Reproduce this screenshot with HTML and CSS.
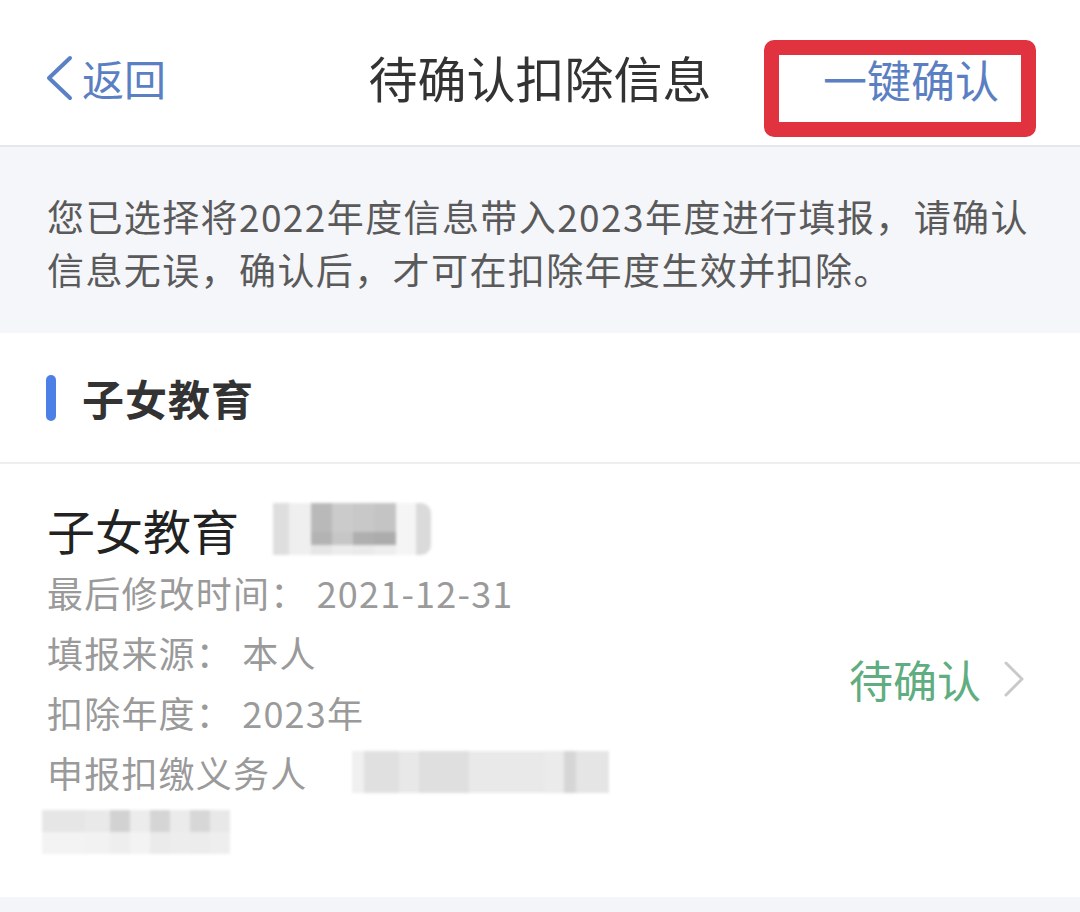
FILE: index.html
```html
<!DOCTYPE html>
<html lang="zh-CN">
<head>
<meta charset="utf-8">
<title>待确认扣除信息</title>
<link rel="stylesheet" href="styles.css">
</head>
<body>
<div class="page">
  <header class="nav">
    <div class="nav-left">
      <svg class="back-icon" width="30" height="46" viewBox="0 0 30 46"><polyline points="26,3 5,23 26,43" fill="none" stroke="#5a80c6" stroke-width="4" stroke-linecap="round" stroke-linejoin="round"/></svg>
      <span class="back-text">返回</span>
    </div>
    <div class="nav-title">待确认扣除信息</div>
    <div class="nav-right">
      <div class="confirm-box"><span class="confirm-text">一键确认</span></div>
    </div>
  </header>

  <section class="notice">
    <p class="notice-text">您已选择将2022年度信息带入2023年度进行填报，请确认信息无误，确认后，才可在扣除年度生效并扣除。</p>
  </section>

  <section class="section-head">
    <span class="bar"></span>
    <h2 class="section-title">子女教育</h2>
  </section>

  <section class="item">
    <div class="item-main">
      <div class="item-title">子女教育<span class="redact r1"><i class="c a"></i><i class="c b"></i><i class="c d"></i><i class="c e"></i><i class="c f"></i><i class="c g"></i><i class="c h"></i><i class="c i"></i></span></div>
      <div class="line">最后修改时间： 2021-12-31</div>
      <div class="line">填报来源： 本人</div>
      <div class="line">扣除年度： 2023年</div>
      <div class="line">申报扣缴义务人<span class="redact r2"><i class="c a"></i><i class="c b"></i><i class="c d"></i><i class="c e"></i><i class="c f"></i><i class="c g"></i><i class="c h"></i><i class="c i"></i></span></div>
      <div class="line"><span class="redact r3"><i class="c a"></i><i class="c b"></i><i class="c d"></i><i class="c e"></i><i class="c f"></i><i class="c g"></i><i class="c h"></i><i class="c i"></i></span></div>
    </div>
    <div class="item-status">
      <span class="status-text">待确认</span>
      <svg class="chev" width="22" height="36" viewBox="0 0 22 36"><polyline points="3,2 19,18 3,34" fill="none" stroke="#c9c9c9" stroke-width="3" stroke-linecap="round" stroke-linejoin="round"/></svg>
    </div>
  </section>

  <div class="bottom-band"></div>
</div>
</body>
</html>
```

FILE: styles.css
```css
* { box-sizing: border-box; }
html, body { margin: 0; padding: 0; background: #ffffff; }
body {
  font-family: "Noto Sans CJK SC", "Noto Sans", sans-serif;
  width: 1080px;
  height: 912px;
  overflow: hidden;
}
.page { display: flex; flex-direction: column; height: 912px; }

.nav {
  height: 147px;
  display: grid;
  grid-template-columns: 1fr auto 1fr;
  align-items: center;
  border-bottom: 2px solid #e6e7ea;
  background: #fff;
}
.nav-left { display: flex; align-items: center; padding-left: 44px; gap: 8px; padding-top: 10px; }
.back-icon { display: block; }
.back-text { font-size: 42px; color: #5b7fc3; line-height: 1; }
.nav-title { font-size: 49px; color: #333; line-height: 1; padding-top: 8px; }
.nav-right { display: flex; justify-content: flex-end; padding-right: 44px; padding-top: 32px; }
.confirm-box {
  width: 272px;
  height: 97px;
  border: 15px solid #e0323f;
  border-radius: 10px;
  display: flex;
  align-items: center;
  justify-content: flex-end;
  padding-right: 22px;
}
.confirm-text { font-size: 44px; color: #5b7fc3; line-height: 1; margin-top: -20px; }

.notice {
  background: #f5f6fa;
  height: 186px;
  padding: 43px 40px 0 47px;
}
.notice-text {
  margin: 0;
  font-size: 37px;
  letter-spacing: 1.4px;
  line-height: 53px;
  color: #5a5a5a;
}

.section-head {
  height: 131px;
  display: flex;
  align-items: center;
  padding-left: 46px;
  border-bottom: 2px solid #eeeeef;
  gap: 26px;
}
.bar { width: 10px; height: 46px; border-radius: 5px; background: #4c80e6; }
.section-title { margin: 0; font-size: 42px; font-weight: 700; color: #333; line-height: 1; letter-spacing: 1px; }

.item {
  display: flex;
  align-items: center;
  justify-content: space-between;
  padding: 34px 55px 34px 47px;
  flex: 1;
}
.item-main { display: flex; flex-direction: column; }
.item-title { font-size: 48px; color: #222; line-height: 60px; margin-bottom: 3px; display: flex; align-items: center; }
.line { font-size: 36px; color: #9a9a9a; line-height: 60px; height: 60px; display: flex; align-items: center; letter-spacing: 1.2px; }

.redact { display: flex; filter: blur(1.6px); }
.redact .c { display: block; height: 100%; }
.r1 { height: 52px; margin-left: 34px; }
.r1 .a { width: 16px; background: #dedede; }
.r1 .b { width: 22px; background: #efefef; }
.r1 .d { width: 21px; background: linear-gradient(#b9b9b9 55%, #b3b3b3 55%, #b3b3b3 80%, #e6e6e6 80%); }
.r1 .e { width: 21px; background: linear-gradient(#cbcbcb 55%, #c6c6c6 55%, #c6c6c6 80%, #ececec 80%); }
.r1 .f { width: 21px; background: linear-gradient(#c8c8c8 55%, #afafaf 55%, #afafaf 80%, #eaeaea 80%); }
.r1 .g { width: 22px; background: linear-gradient(#c4c4c4 55%, #acacac 55%, #acacac 80%, #eeeeee 80%); }
.r1 .h { width: 20px; background: #f5f5f5; }
.r1 .i { width: 15px; background: #dadada; border-radius: 0 10px 10px 0; }

.r2 { height: 42px; margin-left: 45px; }
.r2 .a { width: 12px; background: #f0f0f0; }
.r2 .b { width: 35px; background: #e0e0e0; }
.r2 .d { width: 20px; background: #e8e8e8; }
.r2 .e { width: 50px; background: #dfdfdf; }
.r2 .f { width: 75px; background: #e9e9e9; }
.r2 .g { width: 20px; background: #ebebeb; }
.r2 .h { width: 12px; background: #d6d6d6; }
.r2 .i { width: 33px; background: #e5e5e5; }

.r3 { height: 44px; margin-left: -5px; }
.r3 .a { width: 43px; background: linear-gradient(#e6e6e6 50%, #f3f3f3 50%); }
.r3 .b { width: 25px; background: linear-gradient(#e9e9e9 50%, #f2f2f2 50%); }
.r3 .d { width: 20px; background: linear-gradient(#d2d2d2 50%, #eeeeee 50%); }
.r3 .e { width: 20px; background: linear-gradient(#ececec 50%, #f3f3f3 50%); }
.r3 .f { width: 20px; background: linear-gradient(#d5d5d5 50%, #ebebeb 50%); }
.r3 .g { width: 20px; background: linear-gradient(#ebebeb 50%, #ededed 50%); }
.r3 .h { width: 20px; background: linear-gradient(#d7d7d7 50%, #ececec 50%); }
.r3 .i { width: 20px; background: linear-gradient(#e8e8e8 50%, #eeeeee 50%); }

.item-status { display: flex; align-items: center; gap: 22px; margin-top: -4px; }
.status-text { font-size: 44px; color: #5fad80; line-height: 1; }
.chev { display: block; }

.bottom-band { height: 15px; background: #f4f5f8; flex: none; }
```
